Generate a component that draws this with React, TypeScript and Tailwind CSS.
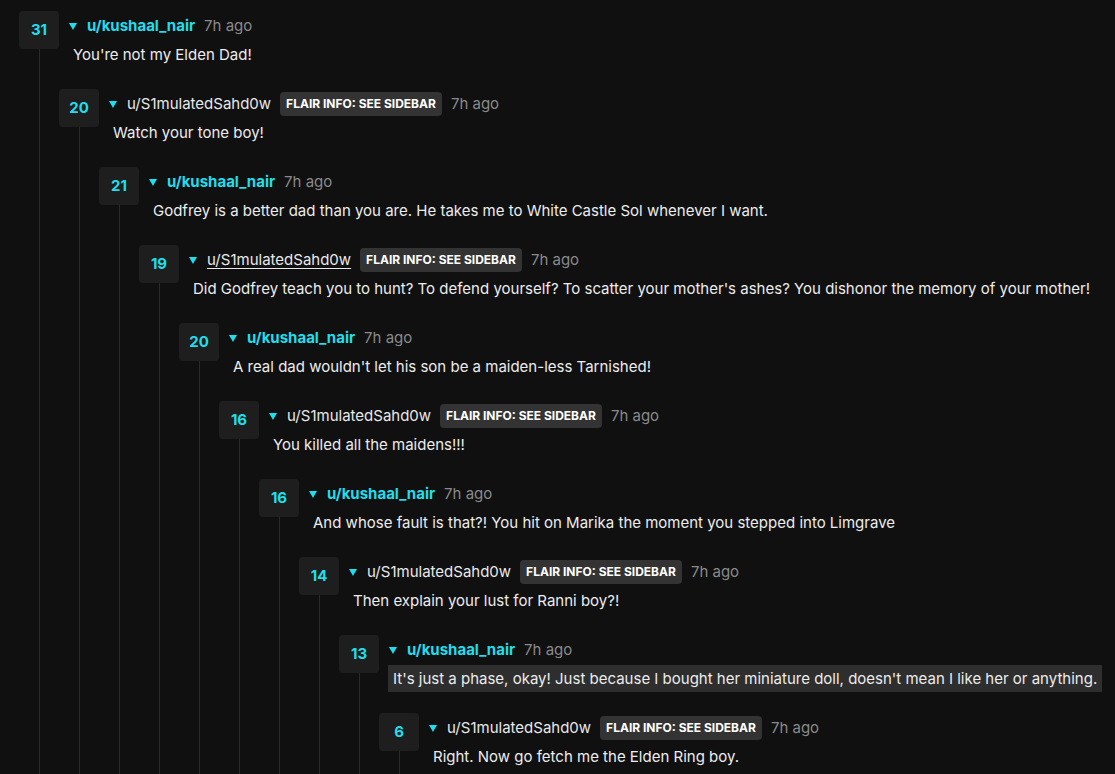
import React from 'react';

type Comment = {
  score: number;
  user: string;
  op?: boolean;
  flair?: string;
  time: string;
  body: string;
  underline?: boolean;
  highlight?: boolean;
};

const thread: Comment[] = [
  { score: 31, user: 'kushaal_nair', op: true, time: '7h ago', body: "You're not my Elden Dad!" },
  { score: 20, user: 'S1mulatedSahd0w', flair: 'Flair info: see sidebar', time: '7h ago', body: 'Watch your tone boy!' },
  { score: 21, user: 'kushaal_nair', op: true, time: '7h ago', body: 'Godfrey is a better dad than you are. He takes me to White Castle Sol whenever I want.' },
  { score: 19, user: 'S1mulatedSahd0w', flair: 'Flair info: see sidebar', time: '7h ago', underline: true, body: "Did Godfrey teach you to hunt? To defend yourself? To scatter your mother's ashes? You dishonor the memory of your mother!" },
  { score: 20, user: 'kushaal_nair', op: true, time: '7h ago', body: "A real dad wouldn't let his son be a maiden-less Tarnished!" },
  { score: 16, user: 'S1mulatedSahd0w', flair: 'Flair info: see sidebar', time: '7h ago', body: 'You killed all the maidens!!!' },
  { score: 16, user: 'kushaal_nair', op: true, time: '7h ago', body: 'And whose fault is that?! You hit on Marika the moment you stepped into Limgrave' },
  { score: 14, user: 'S1mulatedSahd0w', flair: 'Flair info: see sidebar', time: '7h ago', body: 'Then explain your lust for Ranni boy?!' },
  { score: 13, user: 'kushaal_nair', op: true, time: '7h ago', highlight: true, body: "It's just a phase, okay! Just because I bought her miniature doll, doesn't mean I like her or anything." },
  { score: 6, user: 'S1mulatedSahd0w', flair: 'Flair info: see sidebar', time: '7h ago', body: 'Right. Now go fetch me the Elden Ring boy.' },
];

// each reply sits one step in, the score box draws the thread line down
const CommentNode: React.FC<{ index: number }> = ({ index }) => {
  const c = thread[index];
  if (!c) return null;
  return (
    <div className="flex">
      <div className="flex w-10 shrink-0 flex-col items-center">
        <div className="flex h-[38px] w-10 items-center justify-center rounded-[4px] bg-[#1e1e1e] text-[15px] font-bold text-[#1fdfec]">
          {c.score}
        </div>
        <div className="w-px flex-1 bg-[#2a2a2a]" />
      </div>
      <div className="min-w-0 flex-1">
        <div className="flex h-[28px] items-center whitespace-nowrap pl-[10px] pt-[2px] text-[15px]">
          <svg width="8" height="7" viewBox="0 0 8 7" className="mr-[10px] shrink-0">
            <path d="M0 0 H8 L4 7 Z" fill="#1fdfec" />
          </svg>
          <span
            className={
              c.op
                ? 'font-bold text-[#1fdfec]'
                : `text-[#e8e8e8] ${c.underline ? 'underline underline-offset-[3px]' : ''}`
            }
          >
            u/{c.user}
          </span>
          {c.flair && (
            <span className="ml-[9px] flex h-6 items-center rounded-[4px] bg-[#333333] px-[6px] text-[12px] font-bold uppercase text-white">
              {c.flair}
            </span>
          )}
          <span className="ml-[9px] text-[#8a8a8a]">{c.time}</span>
        </div>
        <div className="mb-[21px] mt-[2px] pl-[9px]">
          <p
            className={`inline-block whitespace-nowrap px-[5px] py-[4px] text-[15px] leading-[19px] text-[#ececec] ${
              c.highlight ? 'bg-[#2e2e2e]' : ''
            }`}
          >
            {c.body}
          </p>
        </div>
        <CommentNode index={index + 1} />
      </div>
    </div>
  );
};

export default function App() {
  return (
    <div
      className="min-h-screen overflow-hidden bg-[#101010] pl-[19px] pt-[11px]"
      style={{ fontFamily: 'Inter, "Noto Sans", sans-serif' }}
    >
      <CommentNode index={0} />
    </div>
  );
}
